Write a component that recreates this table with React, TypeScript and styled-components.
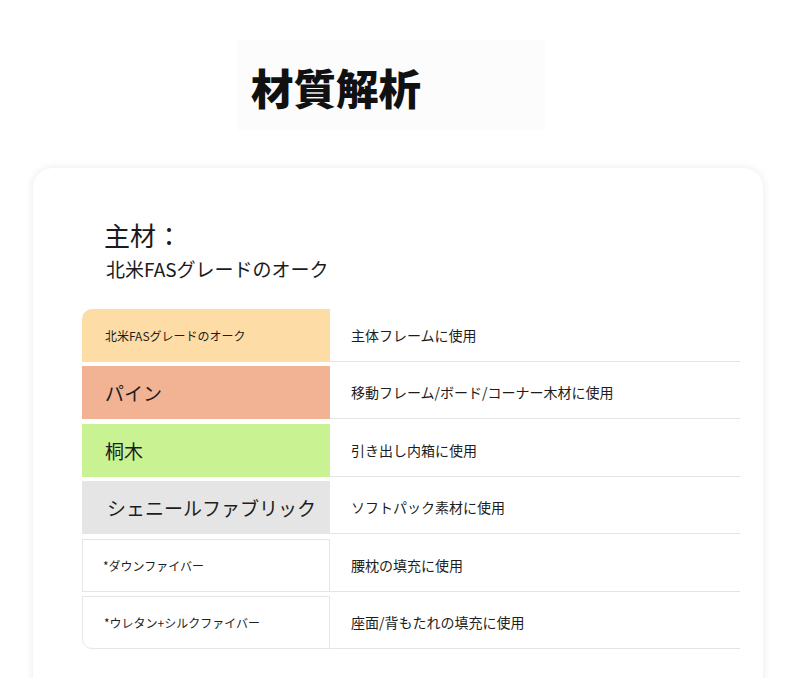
import React from "react";
import styled, { createGlobalStyle } from "styled-components";

const GlobalStyle = createGlobalStyle`
  html, body {
    margin: 0;
    padding: 0;
    background: #ffffff;
  }
  body {
    font-family: "Noto Sans CJK JP", "Noto Sans", sans-serif;
    color: #1c1c1c;
  }
`;

const Page = styled.div`
  width: 790px;
  height: 678px;
  overflow: hidden;
  display: flex;
  flex-direction: column;
  & > * {
    flex: none;
  }
`;

const TitleBox = styled.div`
  margin: 40px 0 0 237px;
  width: 308px;
  height: 90px;
  padding: 5px 0 0 14px;
  box-sizing: border-box;
  display: flex;
  align-items: center;
  background: #fcfcfc;
`;

const Title = styled.h1`
  margin: 0;
  font-size: 42.5px;
  font-weight: 900;
  line-height: 1;
  color: #111;
  letter-spacing: 0;
`;

const Card = styled.section`
  margin: 38px 0 0 33px;
  width: 730px;
  box-sizing: border-box;
  background: #fff;
  border-radius: 20px;
  box-shadow: 0 0 10px rgba(0, 0, 0, 0.09);
  padding: 50px 0 80px 49px;
  display: flex;
  flex-direction: column;
`;

const Heading = styled.h2`
  margin: 0 0 0 22px;
  font-size: 26px;
  line-height: 34px;
  font-weight: 400;
  color: #1a1a1a;
`;

const SubHeading = styled.p`
  margin: 4px 0 0 24px;
  font-size: 19px;
  line-height: 26px;
  color: #1a1a1a;
`;

const Table = styled.div`
  margin-top: 27px;
  width: 658px;
  display: grid;
  grid-auto-rows: 53px;
  row-gap: 4.4px;
`;

const Row = styled.div`
  display: flex;
`;

type CellProps = {
  $bg?: string;
  $size: number;
  $outlined?: boolean;
  $pos?: "first" | "last";
  $pad?: number;
};

const MaterialCell = styled.div<CellProps>`
  width: 248px;
  flex: none;
  box-sizing: border-box;
  display: flex;
  align-items: center;
  padding-left: ${(p) => p.$pad ?? 23}px;
  background: ${(p) => p.$bg ?? "#fff"};
  border: ${(p) => (p.$outlined ? "1px solid #e6e6e6" : "none")};
  border-top-left-radius: ${(p) => (p.$pos === "first" ? "10px" : "0")};
  border-bottom-left-radius: ${(p) => (p.$pos === "last" ? "10px" : "0")};
  font-size: ${(p) => p.$size}px;
  color: #1d1d1d;
  white-space: nowrap;
`;

const UseCell = styled.div`
  flex: 1;
  display: flex;
  align-items: center;
  padding-left: 21px;
  border-bottom: 1px solid #e4e4e4;
  font-size: 14px;
  color: #1d1d1d;
  white-space: nowrap;
`;

const rows: {
  name: string;
  use: string;
  bg?: string;
  size: number;
  outlined?: boolean;
  pad?: number;
}[] = [
  { name: "北米FASグレードのオーク", use: "主体フレームに使用", bg: "#fddca5", size: 12 },
  { name: "パイン", use: "移動フレーム/ボード/コーナー木材に使用", bg: "#f1b393", size: 19 },
  { name: "桐木", use: "引き出し内箱に使用", bg: "#c9f393", size: 19 },
  { name: "シェニールファブリック", use: "ソフトパック素材に使用", bg: "#e5e5e5", size: 19, pad: 25 },
  { name: "*ダウンファイバー", use: "腰枕の填充に使用", size: 12, outlined: true, pad: 20 },
  { name: "*ウレタン+シルクファイバー", use: "座面/背もたれの填充に使用", size: 12, outlined: true, pad: 21 },
];

export default function App() {
  return (
    <>
      <GlobalStyle />
      <Page>
        <TitleBox>
          <Title>材質解析</Title>
        </TitleBox>
        <Card>
          <Heading>主材：</Heading>
          <SubHeading>北米FASグレードのオーク</SubHeading>
          <Table>
            {rows.map((r, i) => (
              <Row key={r.name}>
                <MaterialCell
                  $bg={r.bg}
                  $size={r.size}
                  $outlined={r.outlined}
                  $pad={r.pad}
                  $pos={i === 0 ? "first" : i === rows.length - 1 ? "last" : undefined}
                >
                  {r.name}
                </MaterialCell>
                <UseCell>{r.use}</UseCell>
              </Row>
            ))}
          </Table>
        </Card>
      </Page>
    </>
  );
}
